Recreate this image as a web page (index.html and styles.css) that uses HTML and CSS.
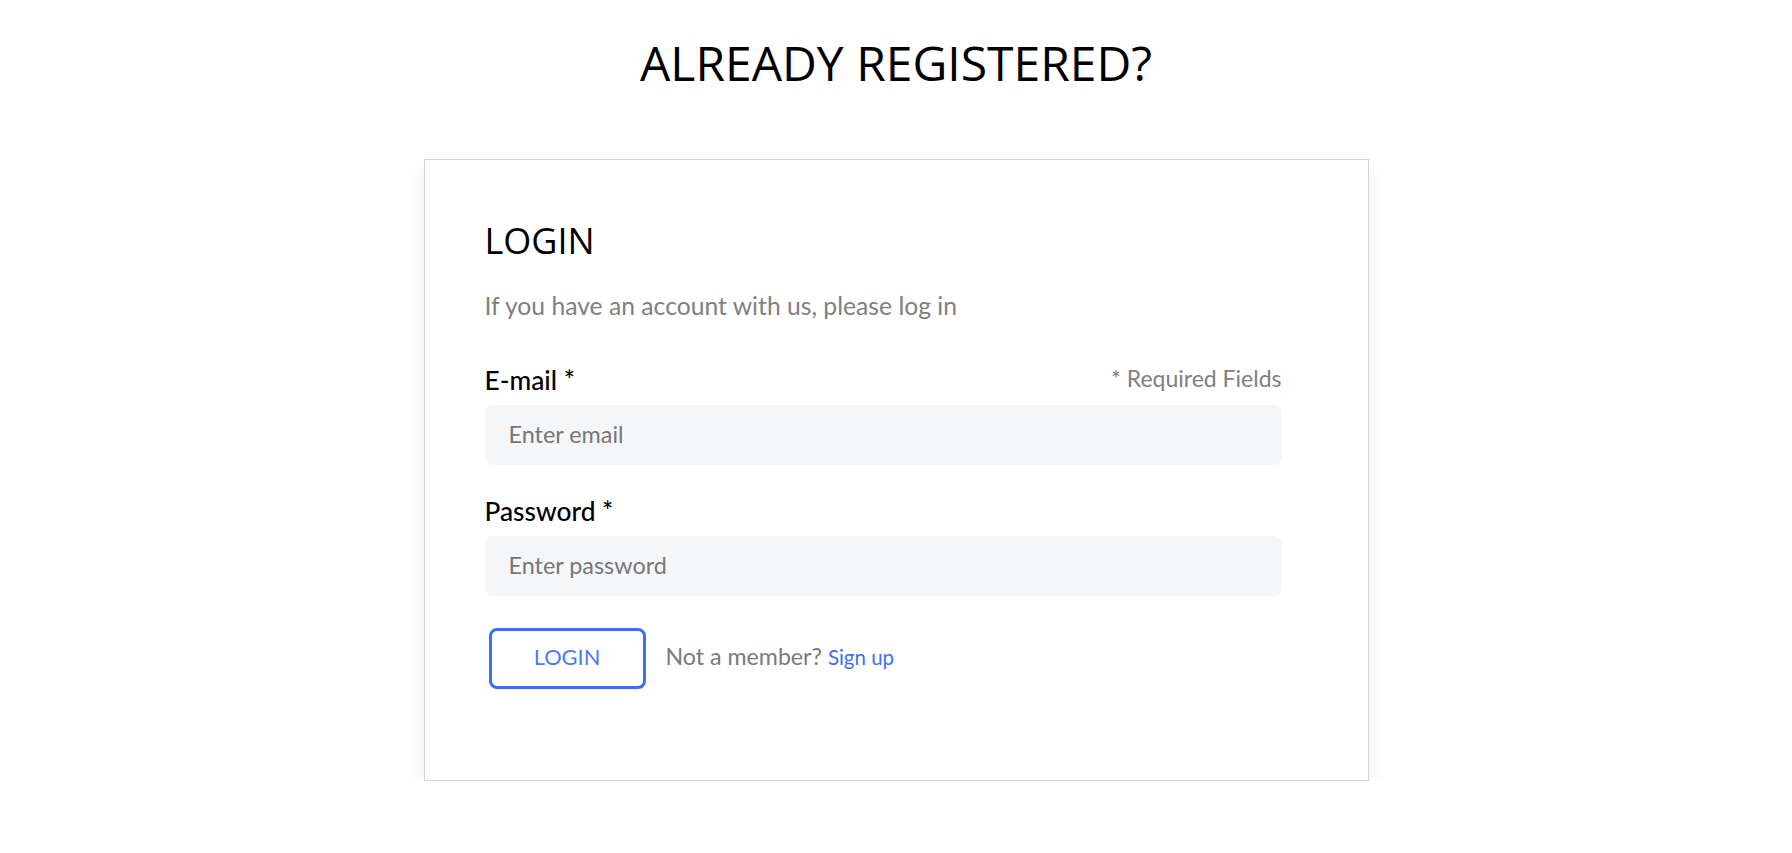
FILE: index.html
```html
<!DOCTYPE html>
<html lang="en">
<head>
<meta charset="utf-8">
<title>Already registered?</title>
<link rel="stylesheet" href="styles.css">
</head>
<body>
<main class="page">
  <h1 class="page-title">ALREADY REGISTERED?</h1>
  <section class="card">
    <h2 class="card-title">LOGIN</h2>
    <p class="card-sub">If you have an account with us, please log in</p>
    <form class="form">
      <div class="label-row">
        <label class="label" for="email">E-mail *</label>
        <span class="required">* Required Fields</span>
      </div>
      <input class="input" id="email" type="email" placeholder="Enter email">
      <div class="label-row second">
        <label class="label" for="pw">Password *</label>
      </div>
      <input class="input" id="pw" type="password" placeholder="Enter password">
      <div class="actions">
        <button class="btn" type="button">LOGIN</button>
        <span class="member">Not a member? <a class="signup" href="#">Sign up</a></span>
      </div>
    </form>
  </section>
</main>
</body>
</html>
```
FILE: styles.css
```css
* { box-sizing: border-box; }
html, body { margin: 0; padding: 0; background: #fff; }
body { font-family: "Open Sans", "Noto Sans", sans-serif; color: #000; }

.page {
  display: flex;
  flex-direction: column;
  align-items: center;
  padding-top: 34px;
}

.page-title {
  margin: 0;
  font-family: "Open Sans", sans-serif;
  font-weight: 400;
  font-size: 48px;
  line-height: 58px;
  text-align: center;
}

.card {
  margin-top: 67px;
  width: 945px;
  border: 1px solid #d4d4d4;
  background: #fff;
  box-shadow: 0 8px 24px rgba(0, 0, 0, 0.06);
  padding: 59px 86px 91px 60px;
}

.card-title {
  margin: 0;
  font-family: "Open Sans", sans-serif;
  font-weight: 400;
  font-size: 36px;
  line-height: 44px;
}

.card-sub {
  margin: 28px 0 0;
  font-family: "Lato", sans-serif;
  font-size: 24.7px;
  line-height: 30px;
  color: #808080;
}

.form { display: flex; flex-direction: column; }

.label-row {
  margin-top: 45px;
  display: flex;
  justify-content: space-between;
  align-items: flex-start;
  font-family: "Lato", sans-serif;
  line-height: 30px;
}
.label-row.second { margin-top: 32px; }

.label { font-size: 26.3px; color: #000; font-weight: 500; line-height: 28px; }
.required { font-size: 23px; color: #808080; line-height: 24px; }

.input {
  margin-top: 11px;
  height: 60px;
  width: 100%;
  border: none;
  border-radius: 8px;
  background: #f5f6f8;
  padding: 0 24px 3px;
  font-family: "Lato", sans-serif;
  font-size: 23.4px;
  color: #333;
  outline: none;
}
.input::placeholder { color: #777; }

.actions {
  margin-top: 32px;
  display: flex;
  align-items: center;
  font-family: "Lato", sans-serif;
}

.btn {
  margin-left: 4px;
  width: 157px;
  height: 61px;
  border: 3px solid #3a6ff6;
  border-radius: 8px;
  background: #fff;
  color: #4a7af6;
  font-family: "Lato", sans-serif;
  font-size: 21.8px;
  padding: 0 0 4px;
  cursor: pointer;
}

.member {
  margin: 0 0 5px 20px;
  font-size: 23.2px;
  color: #7a7a7a;
}
.signup {
  font-size: 20.5px;
  color: #3f6ff5;
  text-decoration: none;
}
```
